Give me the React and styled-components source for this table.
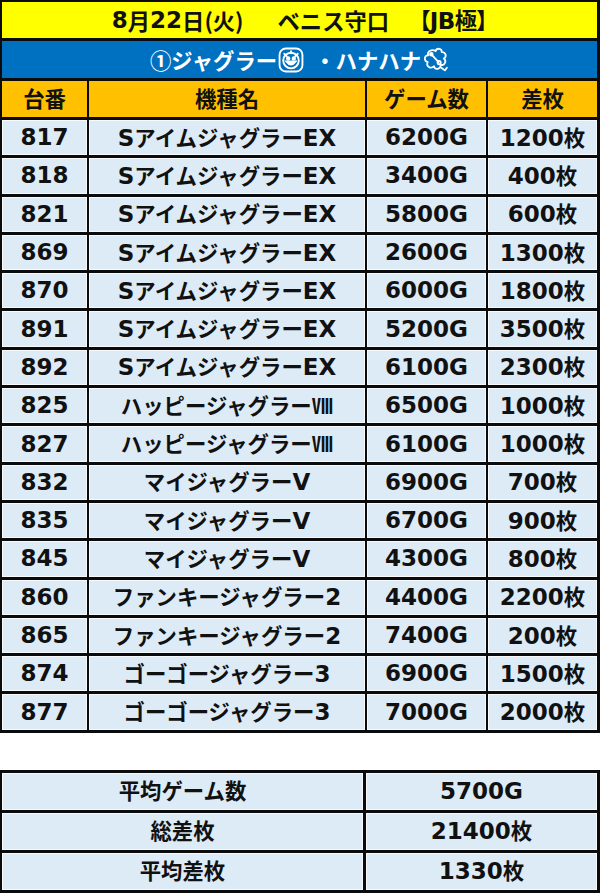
import React from 'react';
import styled, { createGlobalStyle } from 'styled-components';

const GlobalStyle = createGlobalStyle`
  html, body {
    margin: 0;
    padding: 0;
    background: #ffffff;
  }
  body {
    font-family: "DejaVu Sans", "Noto Sans CJK JP", sans-serif;
    font-weight: bold;
    color: #111;
  }
`;

const Page = styled.div`
  width: 600px;
`;

const MainGrid = styled.div`
  display: grid;
  grid-template-columns: 85px 276px 119px 109px;
  grid-template-rows: 36px 37px 36px;
  grid-auto-rows: 35.3px;
  column-gap: 2px;
  row-gap: 3px;
  padding: 2px 3px 3px 2px;
  background: #0b0b0b;
`;

const Banner = styled.div`
  grid-column: 1 / -1;
  display: flex;
  align-items: center;
  justify-content: center;
  font-size: 23px;
  background: ${p => p.$bg};
  color: ${p => p.$fg};
`;

const Line = styled.span`
  display: inline-flex;
  align-items: center;
  white-space: nowrap;
  line-height: 1;
`;

const Tight = styled.span`
  letter-spacing: -0.5px;
`;

const Gap = styled.span`
  display: inline-block;
  width: ${p => p.$w}px;
`;

const Cell = styled.div`
  display: flex;
  align-items: center;
  justify-content: center;
  font-size: 23px;
  white-space: nowrap;
  background: ${p => (p.$head ? '#ffc000' : '#ddebf7')};
  box-shadow: ${p => (p.$head ? 'none' : 'inset 0 0 0 1px rgba(255,255,255,0.75)')};
`;

const Text = styled.span`
  line-height: 1;
`;

const Kana = styled.span`
  font-family: "Noto Sans CJK JP", sans-serif;
  font-weight: 700;
  font-size: ${p => p.$size || '0.93em'};
  font-feature-settings: ${p => (p.$palt ? '"palt" 1' : 'normal')};
`;

const Spacer = styled.div`
  height: 37px;
`;

const SummaryGrid = styled.div`
  display: grid;
  grid-template-columns: 361px 231px;
  grid-auto-rows: 37px;
  column-gap: 3px;
  row-gap: 3px;
  padding: 3px 3px 3px 2px;
  background: #0b0b0b;
`;

const IconWrap = styled.span`
  display: inline-flex;
  margin-left: 1px;
`;

function JugglerIcon() {
  return (
    <IconWrap>
      <svg width="26" height="26" viewBox="0 0 25 25" fill="none" stroke="#fff" strokeWidth="1.8" strokeLinecap="round">
        <rect x="1.5" y="1.5" width="22" height="22" rx="6" />
        <circle cx="12.5" cy="13" r="7.5" />
        <path d="M6 6.5 L8.5 9 M19 6.5 L16.5 9 M12.5 4 L12.5 6" />
        <circle cx="9.8" cy="11" r="1.2" fill="#fff" />
        <circle cx="15.2" cy="11" r="1.2" fill="#fff" />
        <path d="M8 14 Q12.5 20 17 14 Z" fill="#fff" />
      </svg>
    </IconWrap>
  );
}

function HanaIcon() {
  return (
    <IconWrap>
      <svg width="27" height="27" viewBox="0 0 26 26" fill="none" stroke="#fff" strokeWidth="1.7" strokeLinejoin="round">
        <path d="M13 5 C14 1.5 19.5 2 19 6 C22.5 5.5 24.5 10 21 12 C24 14 22 19.5 18 18 C18 22.5 12.5 23.5 11.5 19.5 C8.5 22.5 3.5 19.5 5.5 15.5 C1.5 14.5 2 8.5 6 9 C4.5 5 10 2.5 13 5 Z" />
        <path d="M9 8 L16 15.5" strokeLinecap="round" />
        <circle cx="9" cy="8" r="1.3" fill="#fff" />
        <circle cx="16.5" cy="16" r="1.6" />
        <path d="M18.5 21 L22 23.5 L24 21" strokeLinecap="round" />
      </svg>
    </IconWrap>
  );
}

const rows = [
  ['817', 'Sアイムジャグラー', 'EX', '6200G', '1200'],
  ['818', 'Sアイムジャグラー', 'EX', '3400G', '400'],
  ['821', 'Sアイムジャグラー', 'EX', '5800G', '600'],
  ['869', 'Sアイムジャグラー', 'EX', '2600G', '1300'],
  ['870', 'Sアイムジャグラー', 'EX', '6000G', '1800'],
  ['891', 'Sアイムジャグラー', 'EX', '5200G', '3500'],
  ['892', 'Sアイムジャグラー', 'EX', '6100G', '2300'],
  ['825', 'ハッピージャグラー', 'Ⅷ', '6500G', '1000'],
  ['827', 'ハッピージャグラー', 'Ⅷ', '6100G', '1000'],
  ['832', 'マイジャグラー', 'V', '6900G', '700'],
  ['835', 'マイジャグラー', 'V', '6700G', '900'],
  ['845', 'マイジャグラー', 'V', '4300G', '800'],
  ['860', 'ファンキージャグラー', '2', '4400G', '2200'],
  ['865', 'ファンキージャグラー', '2', '7400G', '200'],
  ['874', 'ゴーゴージャグラー', '3', '6900G', '1500'],
  ['877', 'ゴーゴージャグラー', '3', '7000G', '2000'],
];

function Name({ name, suffix }) {
  const lead = name.startsWith('S') ? 'S' : '';
  const kana = lead ? name.slice(1) : name;
  return (
    <Text>
      {lead}
      <Kana>{kana}</Kana>
      {suffix === 'Ⅷ' ? <Kana>{suffix}</Kana> : suffix}
    </Text>
  );
}

export default function App() {
  return (
    <Page>
      <GlobalStyle />
      <MainGrid>
        <Banner $bg="#ffff00" $fg="#111">
          <Line>
            8<Kana $size="0.97em">月</Kana>22<Kana $size="0.97em">日(火)</Kana>
            <Gap $w={34} />
            <Kana $size="0.97em">ベニス守口</Kana>
            <Gap $w={30} />
            <Tight>
              <Kana $size="0.97em" $palt>【</Kana>JB<Kana $size="0.97em" $palt>極】</Kana>
            </Tight>
          </Line>
        </Banner>
        <Banner $bg="#0070c0" $fg="#fff">
          <Line>
            <Kana>①ジャグラー</Kana>
            <JugglerIcon />
            <Gap $w={10} />
            <Kana>・ハナハナ</Kana>
            <HanaIcon />
          </Line>
        </Banner>
        <Cell $head><Text><Kana>台番</Kana></Text></Cell>
        <Cell $head><Text><Kana>機種名</Kana></Text></Cell>
        <Cell $head><Text><Kana>ゲーム数</Kana></Text></Cell>
        <Cell $head><Text><Kana>差枚</Kana></Text></Cell>
        {rows.map(([no, name, suffix, games, diff]) => (
          <React.Fragment key={no}>
            <Cell><Text>{no}</Text></Cell>
            <Cell><Name name={name} suffix={suffix} /></Cell>
            <Cell><Text>{games}</Text></Cell>
            <Cell><Text>{diff}<Kana>枚</Kana></Text></Cell>
          </React.Fragment>
        ))}
      </MainGrid>
      <Spacer />
      <SummaryGrid>
        <Cell><Text><Kana>平均ゲーム数</Kana></Text></Cell>
        <Cell><Text>5700G</Text></Cell>
        <Cell><Text><Kana>総差枚</Kana></Text></Cell>
        <Cell><Text>21400<Kana>枚</Kana></Text></Cell>
        <Cell><Text><Kana>平均差枚</Kana></Text></Cell>
        <Cell><Text>1330<Kana>枚</Kana></Text></Cell>
      </SummaryGrid>
    </Page>
  );
}
